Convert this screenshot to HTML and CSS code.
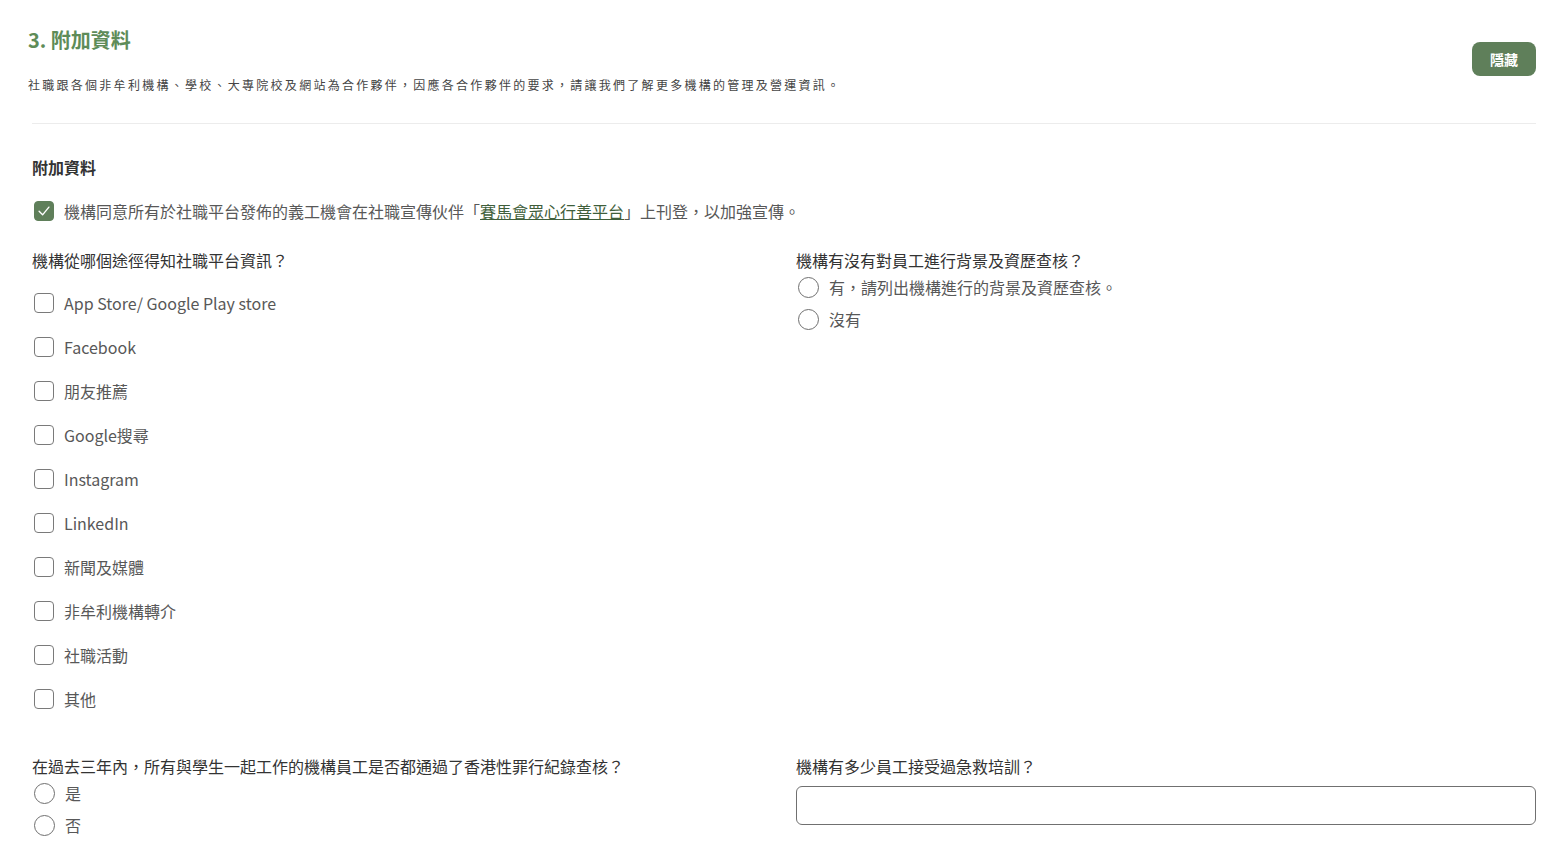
FILE: index.html
```html
<!DOCTYPE html>
<html lang="zh-Hant">
<head>
  <meta charset="UTF-8" />
  <meta name="viewport" content="width=device-width, initial-scale=1.0"/>
  <title>附加資料</title>
  <link rel="stylesheet" href="styles.css">
</head>
<body>
<div class="section-head">
  <div class="head-text">
    <h2 class="title">3. 附加資料</h2>
    <p class="desc">社職跟各個非牟利機構、學校、大專院校及網站為合作夥伴，因應各合作夥伴的要求，請讓我們了解更多機構的管理及營運資訊。</p>
  </div>
  <button class="toggle-btn">隱藏</button>
</div>

<div class="section-body">
  <h3 class="sub-title">附加資料</h3>

  <label class="opt agree">
    <span class="box checked">
      <svg viewBox="0 0 20 20" width="14" height="14" fill="none" stroke="#fff" stroke-width="2" stroke-linecap="round" stroke-linejoin="round"><polyline points="3 10.5 8 15.5 17 4.5" /></svg>
    </span>
    <span>機構同意所有於社職平台發佈的義工機會在社職宣傳伙伴「<a href="#" class="link">賽馬會眾心行善平台</a>」上刊登，以加強宣傳。</span>
  </label>

  <div class="grid">
    <div class="field">
      <div class="question">機構從哪個途徑得知社職平台資訊？</div>
      <div class="check-list">
        <label class="opt"><span class="box"></span><span>App Store/ Google Play store</span></label>
        <label class="opt"><span class="box"></span><span>Facebook</span></label>
        <label class="opt"><span class="box"></span><span>朋友推薦</span></label>
        <label class="opt"><span class="box"></span><span>Google搜尋</span></label>
        <label class="opt"><span class="box"></span><span>Instagram</span></label>
        <label class="opt"><span class="box"></span><span>LinkedIn</span></label>
        <label class="opt"><span class="box"></span><span>新聞及媒體</span></label>
        <label class="opt"><span class="box"></span><span>非牟利機構轉介</span></label>
        <label class="opt"><span class="box"></span><span>社職活動</span></label>
        <label class="opt"><span class="box"></span><span>其他</span></label>
      </div>
    </div>

    <div class="field">
      <div class="question">機構有沒有對員工進行背景及資歷查核？</div>
      <div class="radio-list">
        <label class="opt"><span class="circle"></span><span>有，請列出機構進行的背景及資歷查核。</span></label>
        <label class="opt"><span class="circle"></span><span>沒有</span></label>
      </div>
    </div>

    <div class="field">
      <div class="question">在過去三年內，所有與學生一起工作的機構員工是否都通過了香港性罪行紀錄查核？</div>
      <div class="radio-list">
        <label class="opt"><span class="circle"></span><span>是</span></label>
        <label class="opt"><span class="circle"></span><span>否</span></label>
      </div>
    </div>

    <div class="field">
      <div class="question">機構有多少員工接受過急救培訓？</div>
      <input type="text" class="text-input" />
    </div>
  </div>
</div>
</body>
</html>
```

FILE: styles.css
```css
* {
  box-sizing: border-box;
}

body {
  margin: 0;
  font-family: "Noto Sans CJK TC", "Noto Sans", sans-serif;
  color: #333;
  background: #fff;
}

.section-head {
  display: flex;
  align-items: center;
  justify-content: space-between;
  padding: 24px 30px 0 28px;
}
.title {
  margin: 0;
  font-size: 20px;
  line-height: 32px;
  font-weight: 700;
  color: #5e8c58;
}
.desc {
  margin: 19px 0 0 0;
  font-size: 12px;
  line-height: 20px;
  letter-spacing: 2.27px;
  color: #444;
}
.toggle-btn {
  width: 64px;
  height: 34px;
  margin-bottom: 2px;
  border: none;
  border-radius: 8px;
  background: #5f7f5a;
  color: #fff;
  font-family: inherit;
  font-size: 14px;
  font-weight: 700;
  cursor: pointer;
}

.section-body {
  margin: 28px 30px 0 32px;
  border-top: 1px solid #ececec;
}
.sub-title {
  margin: 31px 0 0 0;
  font-size: 16px;
  line-height: 24px;
  font-weight: 700;
  color: #333;
}

.opt {
  display: flex;
  align-items: center;
  gap: 10px;
  height: 24px;
  font-size: 16px;
  color: #585858;
}
.agree {
  margin-top: 20px;
}
.box {
  width: 20px;
  height: 20px;
  margin-left: 2px;
  border: 1px solid #7a7a7a;
  border-radius: 4px;
  display: flex;
  align-items: center;
  justify-content: center;
  flex-shrink: 0;
}
.box.checked {
  background: #5f7f5a;
  border-color: #5f7f5a;
}
.circle {
  width: 21px;
  height: 21px;
  margin-left: 2px;
  border: 1px solid #6f6f6f;
  border-radius: 50%;
  flex-shrink: 0;
}
.link {
  color: #3f5e3b;
  text-decoration: underline;
}

.grid {
  display: grid;
  grid-template-columns: 1fr 1fr;
  column-gap: 24px;
  row-gap: 43px;
  margin-top: 25px;
}
.question {
  font-size: 16px;
  line-height: 24px;
  color: #333;
}
.check-list {
  display: flex;
  flex-direction: column;
  gap: 20px;
  margin-top: 19px;
}
.radio-list {
  display: flex;
  flex-direction: column;
  gap: 8px;
  margin-top: 3px;
}
.text-input {
  display: block;
  width: 100%;
  height: 39px;
  margin-top: 8px;
  border: 1px solid #707070;
  border-radius: 6px;
  font-family: inherit;
  font-size: 16px;
  padding: 0 12px;
  outline: none;
}
```
